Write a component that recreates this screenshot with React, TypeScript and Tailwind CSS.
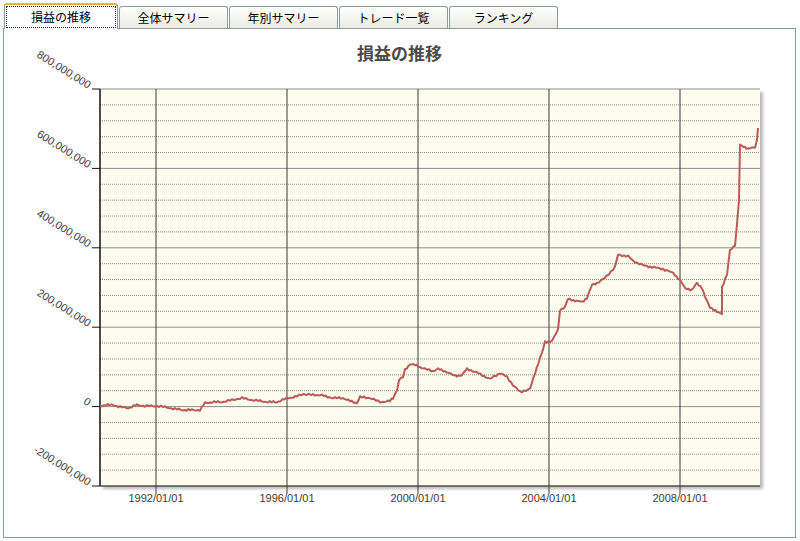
import React from "react";

const tabs = ["損益の推移", "全体サマリー", "年別サマリー", "トレード一覧", "ランキング"];

// plot area in page pixels
const L = 100;
const R = 760;
const T = 89;
const B = 486;

const yLabels = [
  { text: "800,000,000", y: 89 },
  { text: "600,000,000", y: 168.4 },
  { text: "400,000,000", y: 247.8 },
  { text: "200,000,000", y: 327.2 },
  { text: "0", y: 406.6 },
  { text: "-200,000,000", y: 486 },
];

const xLabels = [
  { text: "1992/01/01", x: 156 },
  { text: "1996/01/01", x: 287 },
  { text: "2000/01/01", x: 418 },
  { text: "2004/01/01", x: 549 },
  { text: "2008/01/01", x: 680 },
];

const raw =
  "100,406 106,405 113,405 120,407 128,408 137,405 145,406 157,406 165,407 175,409 183,410 192,410 200,410 205,403 214,402 222,402 232,400 242,398 252,400 260,401 268,402 277,402 288,398 295,397 303,394 313,395 320,395 333,398 343,398 350,401 357,403 360,397 370,398 380,402 390,401 393,398 397,390 399,380 403,377 405,370 410,364 415,365 420,367 425,369 433,371 438,369 447,372 455,376 462,375 467,369 473,371 482,375 490,379 500,373 507,377 513,385 520,392 530,389 535,373 540,358 542,353 545,342 552,341 558,330 560,310 565,307 568,299 577,301 582,302 587,298 592,285 597,283 605,278 615,267 618,255 628,256 633,261 645,266 652,267 663,269 673,273 680,280 685,288 692,290 697,283 702,288 705,297 710,307 717,312 722,314 722,287 727,275 730,250 735,245 737,225 739,200 740,145 745,147 748,149 755,147 757,140 758,128";

// roughen the traced curve a little so it looks like daily equity data
function buildCurve() {
  const pts = raw.split(" ").map((p) => p.split(",").map(Number));
  const out: string[] = [];
  let n = 0;
  for (let i = 0; i < pts.length - 1; i++) {
    const [x1, y1] = pts[i];
    const [x2, y2] = pts[i + 1];
    const steps = Math.max(1, Math.round((x2 - x1) / 2));
    for (let s = 0; s < steps; s++) {
      const t = s / steps;
      const jitter = x2 - x1 > 1 ? Math.sin(n * 2.7) * 0.7 + Math.sin(n * 0.9) * 0.4 : 0;
      out.push(`${(x1 + (x2 - x1) * t).toFixed(1)},${(y1 + (y2 - y1) * t + jitter).toFixed(1)}`);
      n++;
    }
  }
  const last = pts[pts.length - 1];
  out.push(`${last[0]},${last[1]}`);
  return out.join(" ");
}

const curve = buildCurve();

function ProfitChart() {
  const step = (B - T) / 25;
  const rows = Array.from({ length: 26 }, (_, i) => T + i * step);

  return (
    <svg width={791} height={468} className="block" overflow="visible">
      <defs>
        <filter id="shadow" x="-5%" y="-5%" width="110%" height="110%">
          <feGaussianBlur stdDeviation="1.5" />
        </filter>
      </defs>
      <g transform="translate(-4,-68)">
        {/* shadow + plot background */}
        <rect x={L + 3} y={T + 3} width={R - L} height={B - T} fill="#b8b8b8" filter="url(#shadow)" />
        <rect x={L} y={T} width={R - L} height={B - T} fill="#fdfdef" />

        {/* horizontal grid */}
        {rows.map((y, i) =>
          i % 5 === 0 ? (
            <line key={i} x1={L} x2={R} y1={y} y2={y} stroke="#8f8f8f" strokeWidth={1} />
          ) : (
            <line key={i} x1={L} x2={R} y1={y} y2={y} stroke="#8a8a8a" strokeWidth={1} strokeDasharray="1 1" />
          )
        )}

        {/* vertical grid + ticks */}
        {xLabels.map((l) => (
          <line key={l.x} x1={l.x} x2={l.x} y1={T} y2={B + 8} stroke="#3a3a3a" strokeWidth={1} />
        ))}

        {/* axes */}
        <line x1={L} x2={L} y1={T} y2={B} stroke="#111" strokeWidth={1.5} />
        <line x1={L} x2={R} y1={B} y2={B} stroke="#333" strokeWidth={1} />
        {yLabels.map((l) => (
          <line key={l.text} x1={L - 8} x2={L} y1={l.y} y2={l.y} stroke="#111" strokeWidth={1} />
        ))}

        {/* data */}
        <polyline points={curve} fill="none" stroke="#bb5a58" strokeWidth={2} strokeLinejoin="round" />

        {/* labels */}
        <g fontFamily="'Liberation Sans', Arial, sans-serif" fontSize={11} fill="#3c3c3c">
          {yLabels.map((l) => (
            <text
              key={l.text}
              x={88}
              y={l.y}
              textAnchor="end"
              transform={`rotate(32 88 ${l.y})`}
            >
              {l.text}
            </text>
          ))}
          {xLabels.map((l) => (
            <text key={l.text} x={l.x} y={502} textAnchor="middle">
              {l.text}
            </text>
          ))}
        </g>
      </g>
    </svg>
  );
}

export default function App() {
  return (
    <div
      className="w-[800px] h-[541px] bg-white overflow-hidden text-black"
      style={{ fontFamily: "'Noto Sans CJK JP', 'Liberation Sans', sans-serif" }}
    >
      {/* Tabs */}
      <div className="flex items-end h-[28px] pl-[4px]">
        {tabs.map((t, i) =>
          i === 0 ? (
            <div
              key={t}
              className="relative z-10 w-[114px] h-[26px] -mb-px bg-white border-x border-[#919b9c] border-t-[2px] border-t-[#f0b030] rounded-t-[3px] p-px"
            >
              <div className="h-full border border-dotted border-[#333] flex items-center justify-center text-[12px] leading-none">
                {t}
              </div>
            </div>
          ) : (
            <div
              key={t}
              className="w-[109px] h-[22px] ml-px border border-b-0 border-[#919b9c] rounded-t-[3px] bg-gradient-to-b from-white to-[#ebebe4] flex items-center justify-center text-[12px] leading-none"
            >
              {t}
            </div>
          )
        )}
      </div>

      {/* Panel */}
      <div className="ml-[3px] w-[793px] h-[510px] border border-[#919b9c] bg-white flex flex-col">
        <div className="relative z-10 h-[39px] pt-[12px] text-center text-[17px] leading-[24px] font-bold text-[#4a4a4a]">
          損益の推移
        </div>
        <ProfitChart />
      </div>
    </div>
  );
}
